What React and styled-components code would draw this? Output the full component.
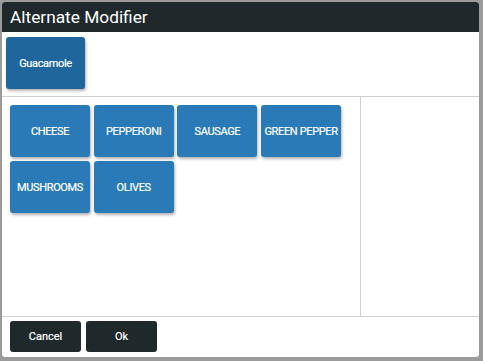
import React from "react";
import styled, { createGlobalStyle } from "styled-components";

const GlobalStyle = createGlobalStyle`
  html, body {
    margin: 0;
    padding: 0;
    background: #9b9b9b;
    font-family: Roboto, "Liberation Sans", Arial, sans-serif;
  }
`;

const Backdrop = styled.div`
  width: 483px;
  height: 361px;
  padding: 2px 4px 4px 2px;
  box-sizing: border-box;
  background: #9b9b9b;
`;

const Dialog = styled.div`
  width: 477px;
  height: 355px;
  background: #fff;
  border-radius: 3px;
  overflow: hidden;
  display: flex;
  flex-direction: column;
`;

const Header = styled.div`
  height: 30px;
  background: #1f282b;
  color: #fff;
  font-size: 17.3px;
  font-weight: 400;
  display: flex;
  align-items: center;
  padding-left: 8px;
`;

const Selected = styled.div`
  height: 65px;
  box-sizing: border-box;
  padding: 5px 4px;
  border-bottom: 1px solid #d0d0d0;
  display: flex;
`;

const Body = styled.div`
  flex: 1;
  display: flex;
  border-bottom: 1px solid #d0d0d0;
`;

const Grid = styled.div`
  width: 359px;
  border-right: 1px solid #d0d0d0;
  padding: 8px 0 0 8px;
  box-sizing: border-box;
  display: grid;
  grid-template-columns: repeat(4, 80px);
  grid-auto-rows: 52px;
  gap: 4px 3.7px;
  align-content: start;
`;

const Side = styled.div`
  flex: 1;
`;

const ModButton = styled.button`
  border: none;
  border-radius: 3px;
  background: ${({ $dark }) => ($dark ? "#1f669c" : "#2a7ab7")};
  color: #fff;
  font-family: inherit;
  font-size: 11px;
  font-weight: 400;
  letter-spacing: -0.35px;
  -webkit-text-stroke: 0.2px #fff;
  width: ${({ $w }) => $w || 80}px;
  height: 52px;
  padding: 0;
  box-shadow: 1px 2px 3px rgba(0, 0, 0, 0.3);
  white-space: nowrap;
`;

const Footer = styled.div`
  height: 40px;
  box-sizing: border-box;
  padding: 4px 8px;
  display: flex;
  gap: 5px;
`;

const FooterButton = styled.button`
  width: 71px;
  height: 31px;
  border: none;
  border-radius: 3px;
  background: #1f282b;
  color: #fff;
  font-family: inherit;
  font-size: 11px;
  font-weight: 400;
  -webkit-text-stroke: 0.2px #fff;
`;

const mods = ["CHEESE", "PEPPERONI", "SAUSAGE", "GREEN PEPPER", "MUSHROOMS", "OLIVES"];

export default function App() {
  return (
    <>
      <GlobalStyle />
      <Backdrop>
        <Dialog>
          <Header>Alternate Modifier</Header>
          <Selected>
            <ModButton $dark $w={79}>Guacamole</ModButton>
          </Selected>
          <Body>
            <Grid>
              {mods.map((m) => (
                <ModButton key={m}>{m}</ModButton>
              ))}
            </Grid>
            <Side />
          </Body>
          <Footer>
            <FooterButton>Cancel</FooterButton>
            <FooterButton>Ok</FooterButton>
          </Footer>
        </Dialog>
      </Backdrop>
    </>
  );
}
